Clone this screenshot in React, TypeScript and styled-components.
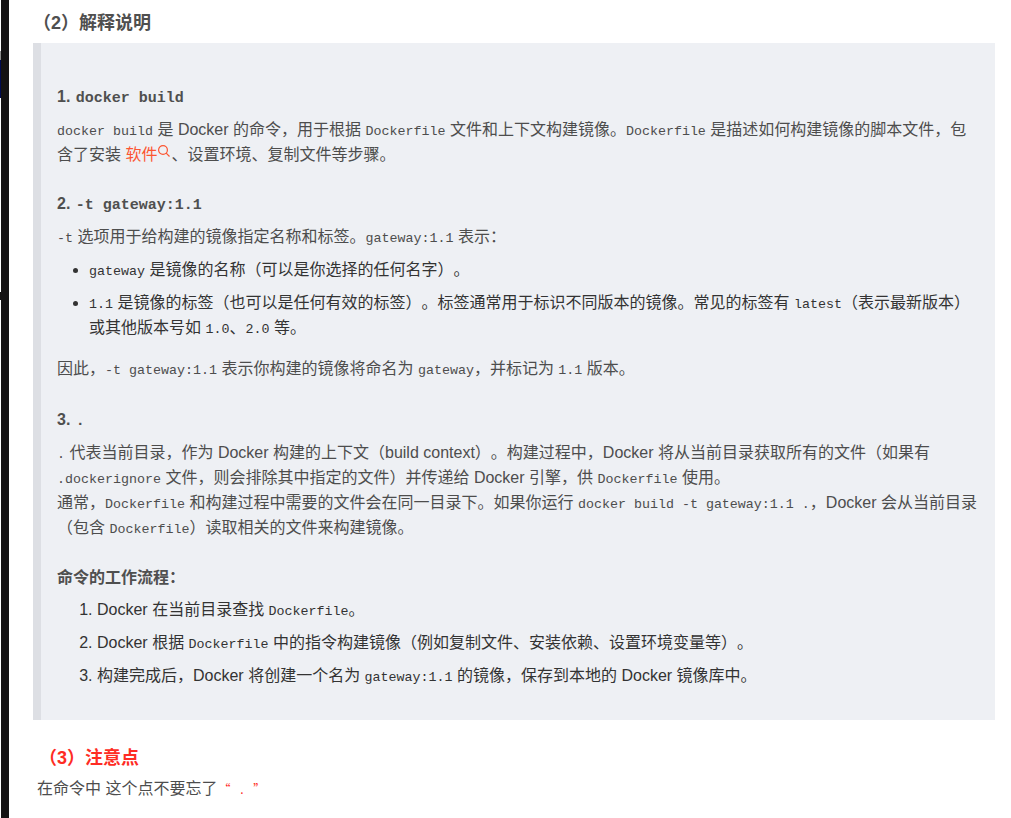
import styled, { createGlobalStyle } from "styled-components";

const GlobalStyle = createGlobalStyle`
  html, body {
    margin: 0;
    padding: 0;
    background: #fff;
  }
`;

const Page = styled.div`
  width: 1011px;
  height: 818px;
  overflow: hidden;
  display: flex;
  font-family: "Liberation Sans", "Noto Sans CJK SC", sans-serif;
  color: #4d4d4d;
  font-size: 16px;
  text-spacing-trim: space-all;
`;

const SideStrip = styled.div`
  width: 8px;
  margin-left: 1px;
  flex-shrink: 0;
  background: #141213;
  position: relative;
`;

const StripNotch = styled.div<{ $top: number; $height: number; $color: string }>`
  position: absolute;
  left: -1px;
  top: ${(p) => p.$top}px;
  width: 1px;
  height: ${(p) => p.$height}px;
  background: ${(p) => p.$color};
`;

const Main = styled.div`
  flex: 1;
  padding: 12px 16px 0 24px;
`;

const SectionTitle = styled.h2`
  margin: 0;
  font-size: 18px;
  line-height: 22px;
  font-weight: 700;
  color: #4f4f4f;
`;

const RedTitle = styled(SectionTitle)`
  margin-top: 27px;
  padding-left: 6px;
  color: #fe2c24;
`;

const Quote = styled.blockquote`
  margin: 9px 0 0;
  box-sizing: border-box;
  background: #eef0f4;
  border-left: 8px solid #dddfe4;
  padding: 41px 16px 24px 16px;
`;

const Heading = styled.h3<{ $gap?: number }>`
  margin: 0 0 ${(p) => p.$gap ?? 8}px;
  font-size: 16px;
  line-height: 25px;
  font-weight: 700;
  color: #4f4f4f;
`;

const Para = styled.p<{ $gap?: number }>`
  margin: 0 0 ${(p) => p.$gap ?? 25}px;
  line-height: 25px;
`;

const Code = styled.code`
  font-family: "Liberation Mono", "DejaVu Sans Mono", monospace;
  font-size: 13.33px;
  line-height: 1;
`;

const BoldCode = styled(Code)`
  margin-left: 1px;
  font-size: 15px;
  font-weight: 700;
`;

const KeyLink = styled.a`
  color: #fc5531;
  text-decoration: none;
`;

const SearchIcon = styled.svg`
  width: 14px;
  height: 14px;
  vertical-align: 2px;
`;

const Bullets = styled.ul`
  margin: 0 0 16px;
  padding-left: 32px;
`;

const Numbers = styled.ol`
  margin: 0;
  padding-left: 40px;
`;

const Item = styled.li`
  line-height: 25px;
  margin-bottom: 8px;
  color: #333;
`;

const Note = styled.p`
  margin: 9px 0 0 4px;
  line-height: 22px;
`;

const RedMark = styled.span`
  color: #fe2c24;
  font-size: 12px;
  line-height: 1;
  font-family: "Noto Sans CJK SC", sans-serif;
  margin-left: 1px;
  letter-spacing: 3.5px;
`;

export default function App() {
  return (
    <Page>
      <GlobalStyle />
      <SideStrip>
        <StripNotch $top={51} $height={9} $color="#8d8d8d" />
        <StripNotch $top={60} $height={38} $color="#000a50" />
        <StripNotch $top={292} $height={8} $color="#141213" />
      </SideStrip>
      <Main>
        <SectionTitle>（2）解释说明</SectionTitle>
        <Quote>
          <Heading>
            1. <BoldCode>docker build</BoldCode>
          </Heading>
          <Para $gap={24}>
            <Code>docker build</Code> 是 Docker 的命令，用于根据 <Code>Dockerfile</Code> 文件和上下文构建镜像。<Code>Dockerfile</Code> 是描述如何构建镜像的脚本文件，包含了安装{" "}
            <KeyLink>
              软件
              <SearchIcon viewBox="0 0 14 14" fill="none" stroke="#fc5531" strokeWidth="1.2">
                <circle cx="6" cy="6" r="4.4" />
                <path d="M9.2 9.2 12.5 12.5" />
              </SearchIcon>
            </KeyLink>
            、设置环境、复制文件等步骤。
          </Para>
          <Heading>
            2. <BoldCode>-t gateway:1.1</BoldCode>
          </Heading>
          <Para $gap={8}>
            <Code>-t</Code> 选项用于给构建的镜像指定名称和标签。<Code>gateway:1.1</Code> 表示：
          </Para>
          <Bullets>
            <Item>
              <Code>gateway</Code> 是镜像的名称（可以是你选择的任何名字）。
            </Item>
            <Item>
              <Code>1.1</Code> 是镜像的标签（也可以是任何有效的标签）。标签通常用于标识不同版本的镜像。常见的标签有 <Code>latest</Code>（表示最新版本）或其他版本号如 <Code>1.0</Code>、<Code>2.0</Code> 等。
            </Item>
          </Bullets>
          <Para $gap={26}>
            因此，<Code>-t gateway:1.1</Code> 表示你构建的镜像将命名为 <Code>gateway</Code>，并标记为 <Code>1.1</Code> 版本。
          </Para>
          <Heading>
            3. <BoldCode>.</BoldCode>
          </Heading>
          <Para>
            <Code>.</Code> 代表当前目录，作为 Docker 构建的上下文（build context）。构建过程中，Docker 将从当前目录获取所有的文件（如果有 <Code>.dockerignore</Code> 文件，则会排除其中指定的文件）并传递给 Docker 引擎，供 <Code>Dockerfile</Code> 使用。
            <br />
            通常，<Code>Dockerfile</Code> 和构建过程中需要的文件会在同一目录下。如果你运行 <Code>docker build -t gateway:1.1 .</Code>，Docker 会从当前目录（包含 <Code>Dockerfile</Code>）读取相关的文件来构建镜像。
          </Para>
          <Heading $gap={7}>命令的工作流程：</Heading>
          <Numbers>
            <Item>
              Docker 在当前目录查找 <Code>Dockerfile</Code>。
            </Item>
            <Item>
              Docker 根据 <Code>Dockerfile</Code> 中的指令构建镜像（例如复制文件、安装依赖、设置环境变量等）。
            </Item>
            <Item>
              构建完成后，Docker 将创建一个名为 <Code>gateway:1.1</Code> 的镜像，保存到本地的 Docker 镜像库中。
            </Item>
          </Numbers>
        </Quote>
        <RedTitle>（3）注意点</RedTitle>
        <Note>
          在命令中 这个点不要忘了<RedMark>“ . ”</RedMark>
        </Note>
      </Main>
    </Page>
  );
}
